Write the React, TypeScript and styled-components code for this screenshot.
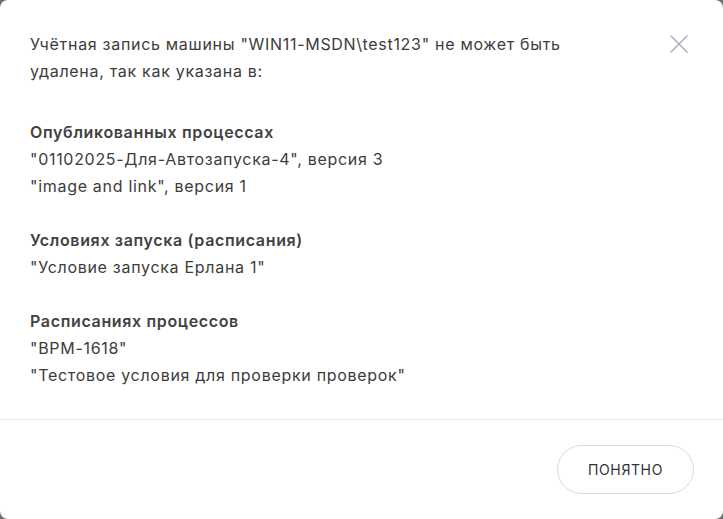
import React from "react";
import styled, { createGlobalStyle } from "styled-components";

const Global = createGlobalStyle`
  html, body { margin: 0; padding: 0; height: 100%; }
  body { background: #6f6f6f; font-family: Inter, "Noto Sans", sans-serif; }
  #root { height: 100%; }
`;

const Modal = styled.div`
  box-sizing: border-box;
  width: 723px;
  height: 519px;
  background: #fff;
  border-radius: 8px;
  display: flex;
  flex-direction: column;
  overflow: hidden;
`;

const Body = styled.div`
  flex: 1;
  display: flex;
  align-items: flex-start;
  justify-content: space-between;
  padding: 31px 34px 0 30px;
  border-bottom: 1px solid #ececef;
`;

const Content = styled.div`
  color: #3c3c3c;
  font-size: 16px;
  letter-spacing: 0.7px;
  line-height: 27px;
`;

const Intro = styled.p`
  margin: 0 0 34px;
  max-width: 545px;
`;

const Group = styled.div`
  margin-bottom: 27px;
`;

const Heading = styled.div`
  font-weight: 600;
  color: #424242;
  letter-spacing: 0.65px;
`;

const Item = styled.div``;

const Close = styled.button`
  border: none;
  background: none;
  padding: 0;
  margin-top: 3px;
  cursor: pointer;
  display: flex;
`;

const Footer = styled.div`
  height: 99px;
  display: flex;
  align-items: center;
  justify-content: flex-end;
  padding: 0 29px;
`;

const OkButton = styled.button`
  width: 137px;
  height: 49px;
  border-radius: 25px;
  border: 1px solid #d5dae6;
  background: #fff;
  color: #333;
  font-family: Inter, "Noto Sans", sans-serif;
  font-size: 14px;
  letter-spacing: 0.6px;
  text-transform: uppercase;
  cursor: pointer;
`;

const groups = [
  {
    title: "Опубликованных процессах",
    items: ['"01102025-Для-Автозапуска-4", версия 3', '"image and link", версия 1'],
  },
  {
    title: "Условиях запуска (расписания)",
    items: ['"Условие запуска Ерлана 1"'],
  },
  {
    title: "Расписаниях процессов",
    items: ['"BPM-1618"', '"Тестовое условия для проверки проверок"'],
  },
];

export default function App() {
  return (
    <>
      <Global />
      <Modal>
        <Body>
          <Content>
            <Intro>
              Учётная запись машины "WIN11-MSDN\test123" не может быть удалена, так как указана в:
            </Intro>
            {groups.map((g) => (
              <Group key={g.title}>
                <Heading>{g.title}</Heading>
                {g.items.map((it) => (
                  <Item key={it}>{it}</Item>
                ))}
              </Group>
            ))}
          </Content>
          <Close aria-label="close">
            <svg width="20" height="20" viewBox="0 0 20 20">
              <path d="M2 2 L18 18 M18 2 L2 18" stroke="#a9b1c6" strokeWidth="1.6" strokeLinecap="round" />
            </svg>
          </Close>
        </Body>
        <Footer>
          <OkButton>Понятно</OkButton>
        </Footer>
      </Modal>
    </>
  );
}
